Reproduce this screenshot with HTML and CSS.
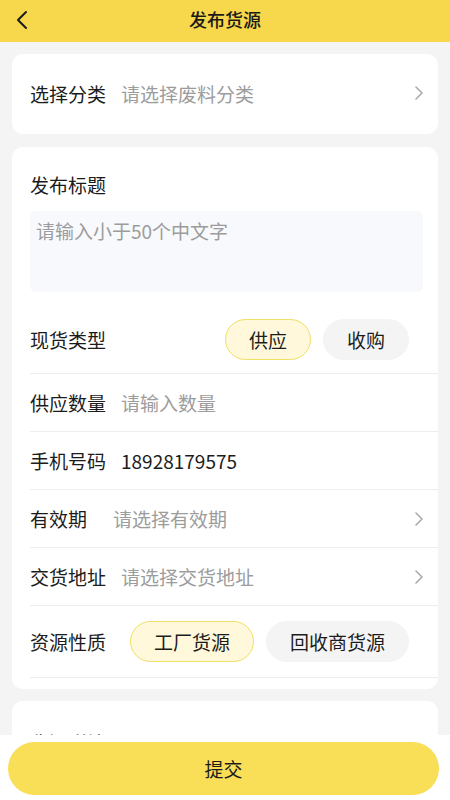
FILE: index.html
```html
<!DOCTYPE html>
<html lang="zh-CN">
<head>
<meta charset="utf-8">
<title>发布货源</title>
<link rel="stylesheet" href="styles.css">
</head>
<body>
<header class="topbar">
  <svg class="back" width="14" height="20" viewBox="0 0 14 20"><path d="M11 2 L3 10 L11 18" fill="none" stroke="#1a1a1a" stroke-width="2" stroke-linecap="round" stroke-linejoin="round"/></svg>
  <h1 class="title">发布货源</h1>
</header>

<main class="content">
  <section class="card card-single">
    <div class="row row-plain">
      <span class="label">选择分类</span>
      <span class="value placeholder">请选择废料分类</span>
      <svg class="chev" width="10" height="18" viewBox="0 0 10 18"><path d="M2 3 L8 9 L2 15" fill="none" stroke="#ababab" stroke-width="1.6" stroke-linecap="round" stroke-linejoin="round"/></svg>
    </div>
  </section>

  <section class="card card-form">
    <div class="block-title">发布标题</div>
    <div class="textarea"><span class="placeholder">请输入小于50个中文字</span></div>

    <div class="row row-pills row-first">
      <span class="label">现货类型</span>
      <div class="pills">
        <span class="pill pill-on">供应</span>
        <span class="pill">收购</span>
      </div>
    </div>
    <div class="row">
      <span class="label">供应数量</span>
      <span class="value placeholder">请输入数量</span>
    </div>
    <div class="row">
      <span class="label">手机号码</span>
      <span class="value">18928179575</span>
    </div>
    <div class="row">
      <span class="label label-short">有效期</span>
      <span class="value placeholder">请选择有效期</span>
      <svg class="chev" width="10" height="18" viewBox="0 0 10 18"><path d="M2 3 L8 9 L2 15" fill="none" stroke="#ababab" stroke-width="1.6" stroke-linecap="round" stroke-linejoin="round"/></svg>
    </div>
    <div class="row">
      <span class="label">交货地址</span>
      <span class="value placeholder">请选择交货地址</span>
      <svg class="chev" width="10" height="18" viewBox="0 0 10 18"><path d="M2 3 L8 9 L2 15" fill="none" stroke="#ababab" stroke-width="1.6" stroke-linecap="round" stroke-linejoin="round"/></svg>
    </div>
    <div class="row row-pills row-last">
      <span class="label">资源性质</span>
      <div class="pills">
        <span class="pill pill-on">工厂货源</span>
        <span class="pill">回收商货源</span>
      </div>
    </div>
  </section>

  <section class="card card-detail">
    <div class="block-title">货源详情</div>
  </section>
</main>

<footer class="bottombar">
  <button class="submit">提交</button>
</footer>
</body>
</html>
```

FILE: styles.css
```css
* { box-sizing: border-box; }

html, body {
  margin: 0;
  padding: 0;
}

body {
  background: #f4f4f4;
  font-family: "Noto Sans CJK SC", "Noto Sans", sans-serif;
  color: #1c1c1c;
  height: 800px;
  overflow: hidden;
}

.topbar {
  height: 42px;
  background: #f7d74b;
  display: flex;
  align-items: center;
  justify-content: center;
  position: relative;
}

.back {
  position: absolute;
  left: 15px;
  top: 10px;
}

.title {
  margin: 0;
  font-size: 18px;
  font-weight: 500;
  line-height: 24px;
  color: #1a1a1a;
  margin-top: -4px;
}

.content {
  padding: 12px 12px 0;
  display: flex;
  flex-direction: column;
  gap: 12px;
}

.card {
  background: #fff;
  border-radius: 11px;
}

.card-single {
  height: 80px;
  display: flex;
  align-items: center;
}

.card-single .row {
  width: 100%;
  border-bottom: none;
  height: auto;
}

.card-form {
  padding: 25px 0 11px 18px;
  margin-top: 1px;
}

.block-title {
  font-size: 19px;
  line-height: 26px;
  color: #1a1a1a;
}

.textarea {
  margin-top: 13px;
  margin-right: 15px;
  height: 81px;
  background: #f8f9fc;
  border-radius: 6px;
  padding: 6px 6px;
  font-size: 19px;
  line-height: 28px;
}

.row {
  display: flex;
  align-items: center;
  height: 58px;
  border-bottom: 1px solid #eeeeee;
  padding-right: 14px;
  font-size: 19px;
}

.row-plain {
  padding-left: 18px;
  margin-top: -2px;
}

.row-first {
  height: auto;
  padding-top: 27px;
  padding-bottom: 13px;
}

.row-last {
  height: auto;
  padding-top: 15px;
  padding-bottom: 15px;
}

.label {
  color: #1c1c1c;
  margin-right: 15px;
  white-space: nowrap;
}

.label-short {
  margin-right: 26px;
}

.value {
  flex: 1;
  color: #1c1c1c;
}

.placeholder {
  color: #9c9c9c;
}

.chev {
  flex: none;
}

.pills {
  margin-left: auto;
  margin-right: 15px;
  display: flex;
  gap: 12px;
}

.pill {
  height: 41px;
  padding: 0 23px;
  border-radius: 21px;
  background: #f4f4f4;
  border: 1px solid #f4f4f4;
  display: flex;
  align-items: center;
  justify-content: center;
  font-size: 19px;
  color: #1c1c1c;
}

.pill-on {
  background: #fff8da;
  border-color: #f0e064;
}

.card-detail {
  height: 120px;
  padding: 29px 18px 0;
}

.bottombar {
  position: fixed;
  left: 0;
  right: 0;
  bottom: 0;
  height: 65px;
  background: #fff;
  padding: 7px 11px 5px 8px;
}

.submit {
  width: 100%;
  height: 53px;
  border: none;
  border-radius: 27px;
  background: #f9de58;
  font-family: "Noto Sans CJK SC", "Noto Sans", sans-serif;
  font-size: 19px;
  color: #1c1c1c;
  display: flex;
  align-items: center;
  justify-content: center;
}
```
